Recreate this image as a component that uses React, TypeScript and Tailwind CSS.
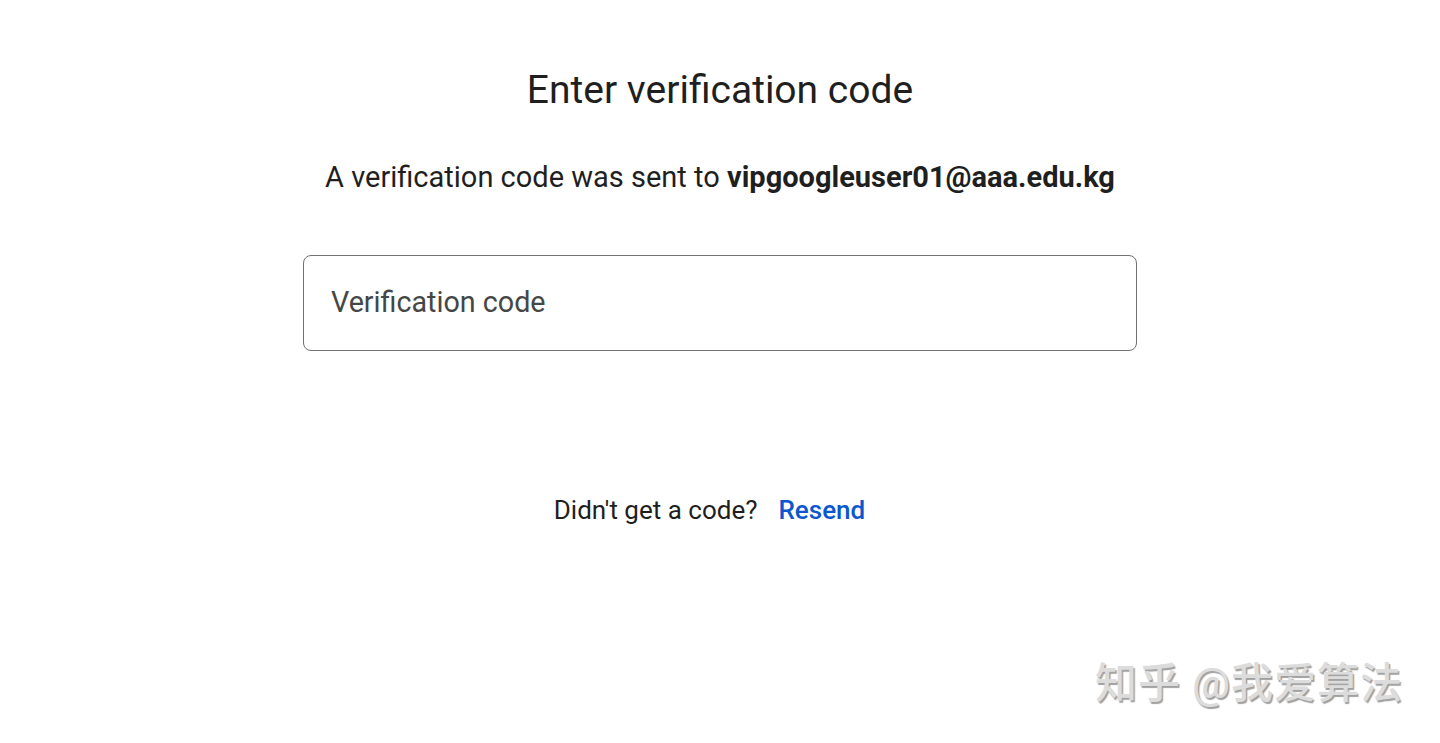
export default function App() {
  return (
    <main
      className="min-h-screen bg-white flex flex-col items-center"
      style={{ fontFamily: "Roboto, 'Noto Sans CJK SC', sans-serif" }}
    >
      <h1 className="mt-[64px] text-[39px] leading-[52px] text-[#1f1f1f] font-normal">
        Enter verification code
      </h1>
      <p className="mt-[42px] text-[29px] leading-[38px] text-[#1f1f1f]">
        A verification code was sent to{" "}
        <span className="font-bold">vipgoogleuser01@aaa.edu.kg</span>
      </p>
      <div className="mt-[59px] w-[834px] h-[96px] rounded-[8px] border-[1.5px] border-[#6f7270] flex items-center px-[27px]">
        <input
          className="w-full outline-none text-[28.7px] text-[#1f1f1f] placeholder:text-[#444746] bg-transparent"
          placeholder="Verification code"
        />
      </div>
      <div className="mt-[140px] mr-[21px] flex items-center gap-[21px] text-[26px]">
        <span className="text-[#1f1f1f]">Didn't get a code?</span>
        <button className="text-[#0b57d0] font-medium">Resend</button>
      </div>
      <div className="flex-1" />
      <div className="w-full flex justify-end pr-[37px] pb-[36px]">
        <span
          className="text-[42px] leading-[46px] text-[#dcdcdc] font-medium tracking-[1px]"
          style={{ textShadow: "1.5px 1.5px 1px #a0a0a0" }}
        >
          知乎 @我爱算法
        </span>
      </div>
    </main>
  );
}
